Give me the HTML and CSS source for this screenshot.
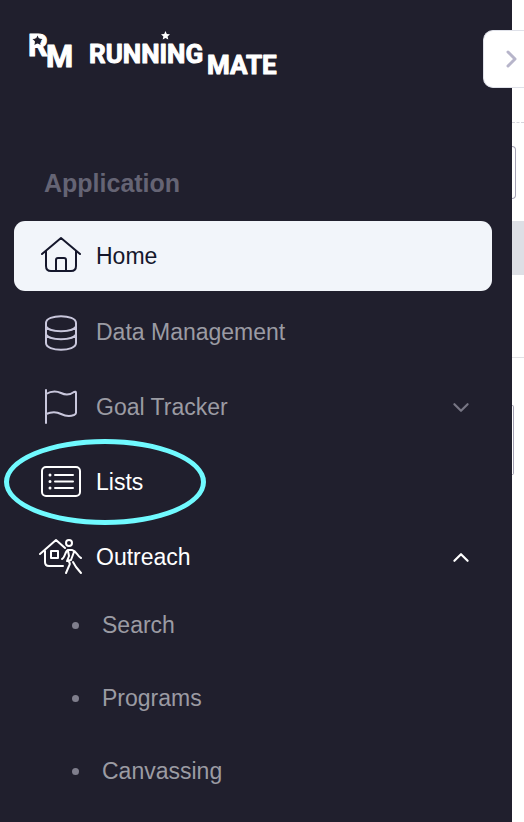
FILE: index.html
```html
<!DOCTYPE html>
<html lang="en">

<head>
    <meta charset="UTF-8">
    <meta name="viewport" content="width=device-width, initial-scale=1.0">
    <title>RunningMate</title>
    <link rel="stylesheet" href="styles.css">
</head>

<body>
    <div class="container">
        <aside class="sidebar">
            <a class="logo" href="#" aria-label="RunningMate">
                <svg width="260" height="62" viewBox="24 22 260 62">
                    <g class="logo-text">
                        <text x="28" y="56" font-size="31">R</text>
                        <text x="46" y="67" font-size="31">M</text>
                        <text x="89" y="63" font-size="26">RUNNING</text>
                        <text x="207" y="74" font-size="26">MATE</text>
                    </g>
                    <path class="logo-patch" d="M37.500 35.500l1.500 3.200 3.500.4-2.600 2.400.7 3.500-3.100-1.800-3.100 1.800.7-3.500-2.600-2.400 3.500-.4z" />
                    <path class="logo-star" d="M165.500 31l1.300 2.900 3.200.4-2.400 2.100.7 3.200-2.800-1.600-2.800 1.600.7-3.200-2.400-2.100 3.200-.4z" />
                </svg>
            </a>

            <h2>Application</h2>
            <nav>
                <ul class="menu">
                    <li>
                        <a class="menu-link active" href="#">
                            <svg class="icon" viewBox="0 0 44 40">
                                <path d="M3 18L22 2l19 16M7 15v15q0 5 5 5h20q5 0 5-5V15M17 35V24q0-2 2-2h6q2 0 2 2v11" />
                            </svg>
                            <span>Home</span>
                        </a>
                    </li>
                    <li>
                        <a class="menu-link" href="#">
                            <svg class="icon" viewBox="0 0 44 40">
                                <path d="M7 11c0-9 30-9 30 0v20c0 9-30 9-30 0zM7 14c2 7 28 7 30 0M7 22c2 7 28 7 30 0" />
                            </svg>
                            <span>Data Management</span>
                        </a>
                    </li>
                    <li>
                        <button class="menu-link" type="button" aria-expanded="false">
                            <svg class="icon" viewBox="0 0 44 40">
                                <path d="M7 3v33M7 7c5-3 11-3 15-1s9 2 13-1q2-1 2 1v20q0 1-2 2c-5 2-9 1-13-1s-10-2-15 0" />
                            </svg>
                            <span>Goal Tracker</span>
                            <svg class="arrow" viewBox="0 0 16 10"><path d="M2 2l6 6 6-6" /></svg>
                        </button>
                    </li>
                    <li class="highlighted">
                        <a class="menu-link bright" href="#">
                            <svg class="icon" viewBox="0 0 44 40">
                                <rect x="3" y="5" width="38" height="29" rx="4" />
                                <path d="M16 13h18M16 19.500h18M16 26h18" />
                                <path class="dots" d="M11 13h.01M11 19.500h.01M11 26h.01" />
                            </svg>
                            <span>Lists</span>
                        </a>
                    </li>
                    <li>
                        <button class="menu-link bright" type="button" aria-expanded="true">
                            <svg class="icon" viewBox="0 0 44 40">
                                <path d="M1 17L17 3l9 8M6 14v11q0 4 4 4h14M12 14h7v7h-7z" />
                                <circle cx="30" cy="6" r="3" />
                                <path d="M23 22c3-1 3-8 6-9h4c5 1 5 6 9 8M29 14l1 5-2 5 4-1 3-8M29 24q3 2 1 5l-3 7M34 25l3 5 5 6" />
                            </svg>
                            <span>Outreach</span>
                            <svg class="arrow" viewBox="0 0 16 10"><path d="M2 8l6-6 6 6" /></svg>
                        </button>
                        <ul class="submenu">
                            <li><a href="#">Search</a></li>
                            <li><a href="#">Programs</a></li>
                            <li><a href="#">Canvassing</a></li>
                        </ul>
                    </li>
                </ul>
            </nav>
        </aside>

        <main class="content">
            <div class="top-bar"></div>
            <div class="field"></div>
            <div class="band"></div>
            <div class="row-line"></div>
            <div class="card"></div>
        </main>

        <button class="toggle" type="button" aria-label="Toggle sidebar">
            <svg width="12" height="20" viewBox="0 0 12 20"><path d="M2 3l7 7-7 7" /></svg>
        </button>
    </div>
</body>

</html>
```
FILE: styles.css
```css
* {
    margin: 0;
    padding: 0;
    box-sizing: border-box;
}

body {
    font-family: "Liberation Sans", Arial, sans-serif;
    background-color: #fff;
}

ul {
    list-style: none;
}

a {
    text-decoration: none;
}

svg {
    display: block;
    fill: none;
    stroke: currentColor;
    stroke-width: 2;
    stroke-linecap: round;
    stroke-linejoin: round;
}

.container {
    display: flex;
    position: relative;
    min-height: 100vh;
}

.sidebar {
    flex: 1;
    padding: 22px 20px 10px 14px;
    background-color: #201f2d;
}

.logo {
    display: block;
    width: max-content;
    margin-left: 10px;
}

.logo-text,
.logo-star {
    fill: #fff;
    stroke: none;
}

.logo-text {
    font-family: Roboto, "Liberation Sans", sans-serif;
    font-weight: bold;
    stroke: #fff;
    stroke-width: 1;
}

.logo-patch {
    fill: #201f2d;
    stroke: none;
}

.sidebar h2 {
    margin: 84px 0 23px 30px;
    font-size: 25px;
    line-height: 30px;
    color: #656474;
}

.menu {
    display: flex;
    flex-direction: column;
    gap: 5px;
}

.menu-link {
    display: flex;
    align-items: center;
    gap: 13px;
    width: 100%;
    height: 70px;
    padding: 0 22px 0 25px;
    border: none;
    border-radius: 11px;
    background: none;
    font-family: inherit;
    font-size: 23px;
    text-align: left;
    color: #9b9ba3;
}

.menu-link.active {
    margin-bottom: 1px;
    background-color: #f2f5fa;
    color: #15172c;
}

.menu-link.bright {
    color: #fff;
}

.icon {
    width: 44px;
    height: 40px;
    color: #c9c7dc;
}

.active .icon,
.bright .icon {
    color: inherit;
}

.dots {
    stroke-width: 3;
}

.arrow {
    width: 18px;
    height: 11px;
    margin-left: auto;
    color: #777684;
}

.bright .arrow {
    color: #fff;
}

/* ring drawn around the Lists entry */
.highlighted {
    position: relative;
}

.highlighted::after {
    content: "";
    position: absolute;
    top: -8px;
    left: -10px;
    width: 202px;
    height: 86px;
    box-sizing: border-box;
    border: 5px solid #70faff;
    border-radius: 50%;
    pointer-events: none;
}

.submenu {
    display: flex;
    flex-direction: column;
    gap: 6px;
}

.submenu a {
    display: flex;
    align-items: center;
    gap: 23px;
    height: 67px;
    padding-left: 58px;
    font-size: 23px;
    color: #9b9ba3;
}

.submenu a::before {
    content: "";
    width: 7px;
    height: 7px;
    border-radius: 50%;
    background-color: #7f7e8c;
}

.content {
    flex: 0 0 12px;
}

.top-bar {
    height: 123px;
    border-bottom: 1px dashed #d5d5dc;
}

.field {
    width: 4px;
    height: 53px;
    margin: 23px 0 22px;
    border: 1px solid #a5a3b5;
    border-left: none;
    border-radius: 0 8px 8px 0;
}

.band {
    height: 54px;
    background-color: #dddfe5;
}

.row-line {
    height: 83px;
    border-bottom: 1px solid #e1e1e5;
}

.card {
    width: 2px;
    height: 70px;
    margin-top: 47px;
    border: 1px solid #a5a3b5;
    border-left: none;
    border-radius: 0 6px 6px 0;
}

.toggle {
    display: flex;
    align-items: center;
    position: absolute;
    top: 30px;
    right: 0;
    width: 41px;
    height: 58px;
    padding-left: 22px;
    border: 1px solid #dfe1e9;
    border-right: none;
    border-radius: 10px 0 0 10px;
    background-color: #fff;
    color: #b7b5ca;
}

.toggle svg {
    stroke-width: 3;
}
```
